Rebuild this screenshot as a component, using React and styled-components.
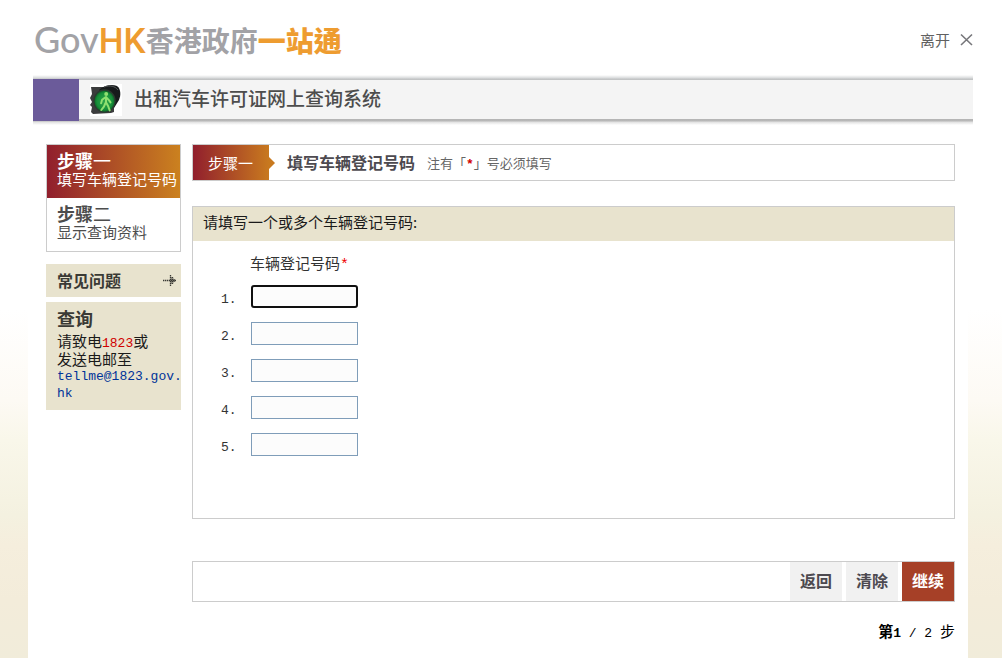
import React from "react";
import styled, { createGlobalStyle } from "styled-components";

const cjk = `"Noto Sans CJK SC", sans-serif`;
const mono = `"Liberation Mono", "Noto Sans CJK SC", monospace`;

const GlobalStyle = createGlobalStyle`
  * { box-sizing: border-box; }
  body {
    margin: 0;
    background: linear-gradient(#fff 0, #fff 310px, #fdfaf4 400px, #f9f7ea 440px, #f4f1e0 515px, #f5eedd 545px, #f3ecda 600px, #f1ecda 658px);
    color: #1a1a1a;
    font: 15px/17px ${cjk};
  }
  h1, h2, h3, p, ol, ul { margin: 0; padding: 0; list-style: none; }
`;

const Page = styled.div`
  margin: 0 34px 0 28px;
  min-height: 100vh;
  background: #fff;
`;

const Top = styled.header`
  height: 75px;
  margin: 0 -5px 0 6px;
  padding-top: 4px;
  display: flex;
  align-items: center;
  justify-content: space-between;
`;

const Logo = styled.a`
  display: flex;
  align-items: center;
  color: #a2a2a6;
  text-decoration: none;
  line-height: 36px;
  white-space: nowrap;
`;

const LogoLatin = styled.span`
  font-family: Lato, sans-serif;
  font-size: 36px;
  font-weight: 500;
`;

const LogoMark = styled.span`
  color: #ee9c30;
  font-family: Roboto, sans-serif;
  font-size: 35px;
  line-height: 1;
  font-weight: 500;
`;

const LogoHan = styled.span`
  font-family: "Noto Sans CJK TC", sans-serif;
  font-size: 28px;
  font-weight: 700;
`;

const Orange = styled.span`
  color: #ee9c30;
  font-weight: 900;
`;

const Exit = styled.a`
  display: flex;
  align-items: center;
  gap: 10px;
  color: #606060;
  text-decoration: none;
`;

const Banner = styled.div`
  margin: 0 -5px 0 5px;
  height: 50px;
  padding: 4px 0;
  background: linear-gradient(#fff 0, #d9dbdc 3px, #c2c4c5 4px, #c2c4c5 5px, #f4f4f4 5px, #f4f4f4 44px, #b4b4b4 44px, #b9b9b9 46px, #e0e0e0 47px, #fff 50px);
  display: flex;
  align-items: center;
`;

const Swatch = styled.div`
  width: 46px;
  height: 42px;
  margin-right: 11px;
  background: #6b5b9a;
`;

const SystemTitle = styled.h1`
  margin-left: 12px;
  padding-bottom: 4px;
  color: #4d4d4d;
  font-size: 19px;
  line-height: 24px;
  font-weight: 500;
`;

const Columns = styled.div`
  display: flex;
  gap: 11px;
  padding: 19px 13px 0 18px;
`;

const Sidebar = styled.aside`
  flex: 0 0 135px;
  min-width: 0;
`;

const Steps = styled.ol`
  border: 1px solid #ccc;
  margin-bottom: 12px;
`;

const Step = styled.li`
  padding: 6px 0 10px 10px;
  line-height: 19px;
  white-space: nowrap;
  color: ${(p) => (p.$active ? "#fff" : "#4d4d4d")};
  background: ${(p) => (p.$active ? "linear-gradient(90deg, #911f2d, #cb811f)" : "#fff")};
`;

const StepName = styled.h3`
  font-size: 18px;
  line-height: 18px;
  font-weight: 700;
`;

const Thin = styled.span`
  font-weight: 400;
`;

const FaqLink = styled.a`
  display: flex;
  align-items: center;
  justify-content: space-between;
  height: 33px;
  margin-bottom: 5px;
  padding: 0 5px 0 11px;
  background: #e8e3ce;
  color: #3a3a35;
  font-size: 16px;
  font-weight: 700;
  text-decoration: none;
`;

const Contact = styled.section`
  padding: 7px 0 8px 11px;
  background: #e8e3ce;
`;

const ContactTitle = styled.h3`
  margin-bottom: 4px;
  color: #3a3a35;
  font-size: 18px;
  line-height: 19px;
  font-weight: 700;
`;

const Latin = styled.span`
  font-family: ${mono};
  font-size: 13px;
  line-height: 1;
  white-space: pre;
`;

const Phone = styled(Latin)`
  color: #d00000;
`;

const Email = styled.a`
  display: block;
  padding-top: 1px;
  color: #003399;
  font-family: ${mono};
  font-size: 13px;
  text-decoration: none;
`;

const Main = styled.main`
  flex: 1;
  min-width: 0;
`;

const StepBar = styled.div`
  display: flex;
  align-items: center;
  height: 37px;
  margin-bottom: 25px;
  border: 1px solid #ccc;
`;

const Badge = styled.div`
  position: relative;
  align-self: stretch;
  padding: 0 16px 0 15px;
  line-height: 35px;
  color: #fff;
  background: linear-gradient(90deg, #911f2d, #c8791f);
  &::after {
    content: "";
    position: absolute;
    left: 100%;
    top: 12px;
    border: 6px solid transparent;
    border-left-color: #c8791f;
    border-right-width: 0;
  }
`;

const StepTitle = styled.h2`
  margin: 0 12px 0 18px;
  color: #4d4a50;
  font-size: 16px;
  font-weight: 700;
`;

const Note = styled.p`
  color: #666;
  font-size: 13px;
`;

const Required = styled.span`
  color: ${(p) => p.$color || "#f00000"};
  font-family: ${mono};
  font-size: ${(p) => (p.$bold ? 13 : 15)}px;
  line-height: 1;
  font-weight: ${(p) => (p.$bold ? 700 : 400)};
`;

const Panel = styled.section`
  border: 1px solid #ccc;
  padding-bottom: 62px;
  margin-bottom: 42px;
`;

const PanelHead = styled.h2`
  padding: 0 10px 4px;
  background: #e8e3ce;
  font-size: 15px;
  line-height: 30px;
  font-weight: 400;
`;

const FieldHead = styled.p`
  padding: 13px 0 12px 57px;
  color: #333;
`;

const Fields = styled.ol`
  display: grid;
  gap: 14px;
`;

const Field = styled.li`
  display: flex;
  align-items: center;
  height: 23px;
`;

const FieldLabel = styled.label`
  width: 58px;
  padding: 5px 0 0 28px;
  color: #333;
  font-family: ${mono};
  font-size: 13px;
`;

const PlateInput = styled.input`
  width: 107px;
  height: 23px;
  padding: 0;
  border: 1px solid #7f9db9;
  background: #fcfcfc;
  font: 15px/15px ${cjk};
  &:focus {
    border: 2px solid #101010;
    border-radius: 3px;
    outline: none;
  }
`;

const Actions = styled.div`
  display: flex;
  justify-content: flex-end;
  gap: 4px;
  height: 41px;
  border: 1px solid #ccc;
`;

const Action = styled.button`
  width: 52px;
  padding: 0 0 4px;
  border: 0;
  background: ${(p) => (p.$primary ? "#a64027" : "#f1f1f1")};
  color: ${(p) => (p.$primary ? "#fff" : "#4d4a50")};
  font: 700 16px/20px ${cjk};
`;

const Progress = styled.p`
  padding: 20px 0 18px;
  text-align: right;
  color: #000;
`;

const CloseIcon = () => (
  <svg width="13" height="13" viewBox="0 0 13 13" fill="none" stroke="#77777b" strokeWidth="1.6" aria-hidden="true">
    <path d="M1 1.5 12 12M12 1.5 1 12" />
  </svg>
);

const ArrowIcon = () => (
  <svg width="13" height="13" viewBox="0 0 13 13" fill="none" stroke="#3a3a35" aria-hidden="true">
    <path d="M0 6.5H13" strokeWidth="1.4" strokeDasharray="1.4 .6" />
    <path d="M7.5 1V12" strokeWidth="1.3" strokeDasharray="1.4 .6" />
    <path d="M9.5 3V10" strokeWidth="1.3" strokeDasharray="1.4 .6" />
    <path d="M11.5 5V8" strokeOpacity=".7" />
    <path d="M8.5 3V10M10.5 4.5V8.5" strokeOpacity=".45" />
  </svg>
);

const WalkSignal = () => (
  <svg width="32" height="32" viewBox="0 0 32 32" aria-hidden="true">
    <defs>
      <radialGradient id="lamp" cx=".5" cy=".5" r=".55">
        <stop offset="0" stopColor="#2ea54a" />
        <stop offset=".7" stopColor="#17903a" />
        <stop offset="1" stopColor="#075a20" />
      </radialGradient>
    </defs>
    <rect width="32" height="32" fill="#fff" />
    <path d="M1 3 13 3 24 7 24 28 21 29 3 30 1 28 2 23 0 21 2 18 0 14 2 10Z" fill="#3b3c3d" />
    <path d="M9 6C14 1 22 0 27 2c4 3 4 9 2 14l-5 8Z" fill="#171a1b" />
    <path d="M14 3c6-2 11-1 14 3" fill="none" stroke="#555a5a" />
    <ellipse cx="14.5" cy="17" rx="11.2" ry="11.8" fill="#2b3a30" />
    <ellipse cx="14.5" cy="17.2" rx="10" ry="10.5" fill="url(#lamp)" />
    <circle cx="16.2" cy="10" r="2" fill="#8fe070" />
    <path d="M16 13v6M15.5 13.2l-3.4 2.6-1 3.4M16.3 13.4l2.8 3 1.4 2M15.5 19l-1.6 3.6-2.6 3.4M16.4 19l1.7 3 1.6 4.4" fill="none" stroke="#8fe070" strokeWidth="2" strokeLinecap="round" strokeLinejoin="round" />
  </svg>
);

export default function App() {
  return (
    <>
      <GlobalStyle />
      <Page>
        <Top>
          <Logo href="#home">
            <LogoLatin>Gov<LogoMark>HK</LogoMark></LogoLatin>
            <LogoHan>香港政府<Orange>一站通</Orange></LogoHan>
          </Logo>
          <Exit href="#exit">离开<CloseIcon /></Exit>
        </Top>
        <Banner>
          <Swatch />
          <WalkSignal />
          <SystemTitle>出租汽车许可证网上查询系统</SystemTitle>
        </Banner>
        <Columns>
          <Sidebar>
            <Steps>
              <Step $active>
                <StepName>步骤<Thin>一</Thin></StepName>
                <p>填写车辆登记号码</p>
              </Step>
              <Step>
                <StepName>步骤<Thin>二</Thin></StepName>
                <p>显示查询资料</p>
              </Step>
            </Steps>
            <FaqLink href="#faq">常见问题<ArrowIcon /></FaqLink>
            <Contact>
              <ContactTitle>查询</ContactTitle>
              <p>请致电<Phone>1823</Phone>或<br />发送电邮至</p>
              <Email href="mailto:tellme@1823.gov.hk">tellme@1823.gov.<wbr />hk</Email>
            </Contact>
          </Sidebar>
          <Main>
            <StepBar>
              <Badge>步骤一</Badge>
              <StepTitle>填写车辆登记号码</StepTitle>
              <Note>注有「<Required $bold $color="#d00000">*</Required>」号必须填写</Note>
            </StepBar>
            <form onSubmit={(e) => e.preventDefault()}>
              <Panel>
                <PanelHead>请填写一个或多个车辆登记号码:</PanelHead>
                <FieldHead>车辆登记号码<Required>*</Required></FieldHead>
                <Fields>
                  {[1, 2, 3, 4, 5].map((n) => (
                    <Field key={n}>
                      <FieldLabel htmlFor={`plate${n}`}>{n}.</FieldLabel>
                      <PlateInput id={`plate${n}`} type="text" autoFocus={n === 1} />
                    </Field>
                  ))}
                </Fields>
              </Panel>
              <Actions>
                <Action type="button">返回</Action>
                <Action type="reset">清除</Action>
                <Action type="submit" $primary>继续</Action>
              </Actions>
            </form>
            <Progress><b>第<Latin>1</Latin></b><Latin>{" / 2 "}</Latin>步</Progress>
          </Main>
        </Columns>
      </Page>
    </>
  );
}
